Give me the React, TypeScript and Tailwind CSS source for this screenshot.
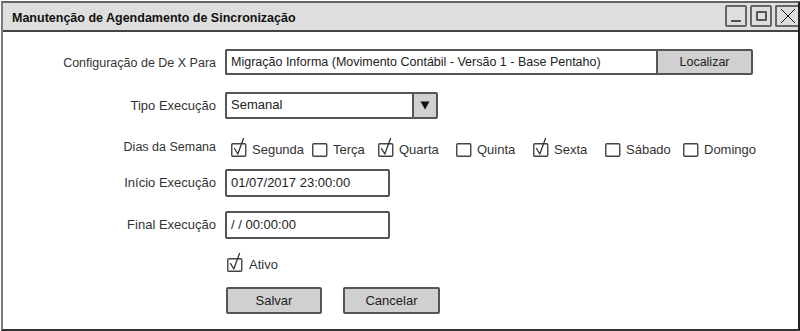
import React from "react";

const font = { fontFamily: '"Liberation Sans", Arial, sans-serif' };

function Check({ checked }: { checked: boolean }) {
  return (
    <svg width="17" height="20" viewBox="0 0 17 20" className="shrink-0 overflow-visible">
      <rect x="0.75" y="5.75" width="14" height="12.5" rx="1" fill="white" stroke="#444" strokeWidth="1.4" />
      {checked && (
        <path d="M3.5 10.5 L6.8 16 L12.5 0.5" fill="none" stroke="#333" strokeWidth="1.3" strokeLinejoin="round" strokeLinecap="round" />
      )}
    </svg>
  );
}

function Day({ label, checked, w }: { label: string; checked: boolean; w: string }) {
  return (
    <div className={`flex items-center ${w}`}>
      <Check checked={checked} />
      <span className="ml-[4px] text-[13px] text-[#333] mt-[4px]">{label}</span>
    </div>
  );
}

export default function App() {
  return (
    <div className="w-[800px] h-[331px] bg-white overflow-hidden" style={font}>
      <div className="mt-[1px] ml-[1px] w-[799px] h-[330px] box-border border-2 border-l-[#7a7a7a] border-t-[#666] border-r-[#222] border-b-[#333] flex flex-col">
        {/* Title bar */}
        <div className="h-[29px] box-border bg-[#dedede] border-b-2 border-[#444] flex items-start">
          <div className="ml-[9px] mt-[6px] text-[12.5px] font-bold text-[#111]">
            Manutenção de Agendamento de Sincronização
          </div>
          <div className="ml-auto mt-[2px] flex gap-[3px]">
            <div className="w-[22px] h-[22px] box-border border-2 border-[#666] rounded-[2px] bg-[#dedede] flex items-end justify-center pb-[3px]">
              <div className="w-[10px] h-[2px] bg-[#555]" />
            </div>
            <div className="w-[22px] h-[22px] box-border border-2 border-[#666] rounded-[2px] bg-[#dedede] flex items-center justify-center">
              <div className="w-[11px] h-[10px] box-border border-2 border-[#555] rounded-[1px]" />
            </div>
            <div className="w-[23px] h-[22px] box-border border-l-2 border-t-2 border-b-2 border-[#666] rounded-l-[2px] bg-[#dedede] flex items-center justify-center">
              <svg width="16" height="16" viewBox="0 0 16 16">
                <path d="M1 1 L15 15 M15 1 L1 15" stroke="#111" strokeWidth="1" />
              </svg>
            </div>
          </div>
        </div>

        {/* Body */}
        <div className="flex flex-col text-[13px] text-[#333]">
          {/* Row 1 */}
          <div className="mt-[17px] flex items-center h-[26px]">
            <div className="w-[213px] text-right text-[12.5px] mt-[2px]">Configuração de De X Para</div>
            <div className="ml-[9px] flex h-[26px]">
              <div className="w-[431px] box-border border-2 border-r-0 border-[#555] rounded-l-[2px] flex items-center pl-[4px] text-[12.5px] text-[#222] whitespace-nowrap">
                Migração Informa (Movimento Contábil - Versão 1 - Base Pentaho)
              </div>
              <div className="w-[97px] box-border border-2 border-[#555] rounded-r-[2px] bg-[#d0d0d0] flex items-center justify-center text-[12.5px] text-[#222]">
                Localizar
              </div>
            </div>
          </div>

          {/* Row 2 */}
          <div className="mt-[17px] flex items-center h-[26px]">
            <div className="w-[213px] text-right mt-[2px]">Tipo Execução</div>
            <div className="ml-[9px] flex h-[27px]">
              <div className="w-[187px] box-border border-2 border-r-0 border-[#555] rounded-l-[2px] flex items-center pl-[4px] text-[#222]">
                Semanal
              </div>
              <div className="w-[26px] box-border border-2 border-[#555] rounded-r-[2px] bg-[#d0d0d0] flex items-center justify-center">
                <svg width="10" height="9" viewBox="0 0 10 9">
                  <path d="M0.5 0.5 L9.5 0.5 L5 8.5 Z" fill="#111" />
                </svg>
              </div>
            </div>
          </div>

          {/* Row 3 */}
          <div className="mt-[18px] flex items-center h-[24px]">
            <div className="w-[213px] text-right text-[12.5px] mb-[2px]">Dias da Semana</div>
            <div className="ml-[15px] flex items-center">
              <Day label="Segunda" checked w="w-[81px]" />
              <Day label="Terça" checked={false} w="w-[66px]" />
              <Day label="Quarta" checked w="w-[78px]" />
              <Day label="Quinta" checked={false} w="w-[77px]" />
              <Day label="Sexta" checked w="w-[72px]" />
              <Day label="Sábado" checked={false} w="w-[78px]" />
              <Day label="Domingo" checked={false} w="w-[100px]" />
            </div>
          </div>

          {/* Row 4 */}
          <div className="mt-[9px] flex items-center h-[28px]">
            <div className="w-[213px] text-right">Início Execução</div>
            <div className="ml-[9px] w-[165px] h-[28px] box-border border-2 border-[#555] rounded-[2px] flex items-center pl-[4px] text-[#222]">
              01/07/2017 23:00:00
            </div>
          </div>

          {/* Row 5 */}
          <div className="mt-[14px] flex items-center h-[28px]">
            <div className="w-[213px] text-right">Final Execução</div>
            <div className="ml-[9px] w-[165px] h-[28px] box-border border-2 border-[#555] rounded-[2px] flex items-center pl-[4px] text-[#222]">
              / / 00:00:00
            </div>
          </div>

          {/* Row 6 */}
          <div className="mt-[12px] flex items-center h-[24px]">
            <div className="w-[213px]" />
            <div className="ml-[11px] flex items-center">
              <Check checked />
              <span className="ml-[5px] mt-[4px]">Ativo</span>
            </div>
          </div>

          {/* Row 7 */}
          <div className="mt-[12px] flex items-center h-[27px]">
            <div className="w-[213px]" />
            <div className="ml-[10px] flex gap-[21px]">
              <div className="w-[96px] h-[27px] box-border border-2 border-[#555] rounded-[2px] bg-[#d0d0d0] flex items-center justify-center text-[#222]">
                Salvar
              </div>
              <div className="w-[97px] h-[27px] box-border border-2 border-[#555] rounded-[2px] bg-[#d0d0d0] flex items-center justify-center text-[#222]">
                Cancelar
              </div>
            </div>
          </div>
        </div>
      </div>
    </div>
  );
}
